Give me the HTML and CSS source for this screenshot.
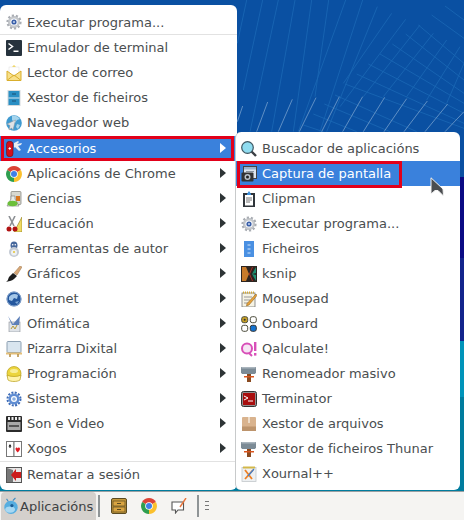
FILE: index.html
```html
<!DOCTYPE html>
<html lang="gl">
<head>
<meta charset="UTF-8" />
<title>Aplicacións</title>
<link rel="stylesheet" href="styles.css">
</head>
<body>
<svg class="defs" width="0" height="0">
  <symbol id="i-gear" viewBox="0 0 16 16"><circle cx="8" cy="8" r="5.6" fill="#c4c7cb" stroke="#c4c7cb" stroke-width="1"/><circle cx="8" cy="8" r="6.6" fill="none" stroke="#a9adb3" stroke-width="2" stroke-dasharray="2.2 1.9"/><circle cx="8" cy="8" r="3.6" fill="#fff"/><circle cx="8" cy="8" r="2.6" fill="#3a5fa8"/><circle cx="8" cy="8" r="1" fill="#c7d4ee"/></symbol>
  <symbol id="i-term" viewBox="0 0 16 16"><rect width="16" height="16" rx="1" fill="#26323d"/><path d="M2.5 3.5l4 3-4 3" fill="none" stroke="#fff" stroke-width="1.5"/><rect x="7.5" y="10.5" width="5" height="1.5" fill="#fff"/></symbol>
  <symbol id="i-mail" viewBox="0 0 16 16"><path d="M8 0l3 3H5z" fill="#f2d34c"/><rect x="3" y="2" width="10" height="8" fill="#fff" stroke="#ddd" stroke-width=".5"/><path d="M1 6l7 5 7-5v9.500H1z" fill="#f8e08a" stroke="#d9ae2c"/><path d="M1.500 15l6.500-5 6.500 5" fill="none" stroke="#d9ae2c"/></symbol>
  <symbol id="i-files" viewBox="0 0 16 16"><rect x="1.500" width="13" height="16" fill="#d5dadd"/><rect x="2.500" y="1" width="11" height="14" fill="#2a8fc4"/><rect x="2.500" y="7.500" width="11" height="1" fill="#d5eaf4"/><rect x="6" y="3.500" width="4" height="1" fill="#1b4e72"/><rect x="6" y="10.500" width="4" height="1" fill="#1b4e72"/></symbol>
  <symbol id="i-web" viewBox="0 0 16 16"><circle cx="8" cy="8" r="7.800" fill="#3f9ad0"/><path d="M6 1c3-1 6 0 8 3l-3 1-2 3-3-3zM11 9l3 1-2 4-2-2z" fill="#a5d4ec"/><path d="M9.500 5L1 9l3 1.500L3 15l2.500-2 1.500 2z" fill="#dfe3e6" stroke="#8a9299" stroke-width=".5"/></symbol>
  <symbol id="i-acc" viewBox="0 0 16 16"><rect x="0.500" y="0.300" width="6.500" height="15.400" rx="3" fill="#d3101c" stroke="#6d0a10" stroke-width=".6"/><path d="M2.500 7.500h2.500M3.750 6.200v2.600" stroke="#fff"/><path d="M8 2l4-2 1 1-2 2 5-1-1 2-3 1 3 4-2 1-4-4-1 1z" fill="#e9edf1"/></symbol>
  <symbol id="i-chrome" viewBox="0 0 16 16"><path d="M8 8L1.100 4A8 8 0 0 1 14.900 4z" fill="#db4437"/><path d="M8 8L14.900 4A8 8 0 0 1 8 16z" fill="#fbc02d"/><path d="M8 8V16A8 8 0 0 1 1.100 4z" fill="#2e9e4f"/><circle cx="8" cy="8" r="3.800" fill="#fff"/><circle cx="8" cy="8" r="3" fill="#3f7fe8"/></symbol>
  <symbol id="i-sci" viewBox="0 0 16 16"><rect x="5" y="0.500" width="10" height="13" rx="1" fill="#d8d8d0" stroke="#7d7d76" stroke-width=".7"/><rect x="10" y="5" width="4" height="5" fill="#d9761e"/><path d="M5 5h4v3l4 7H1l4-7z" fill="#e8ece8" stroke="#777" stroke-width=".6"/><ellipse cx="6.500" cy="12.500" rx="5" ry="2.700" fill="#6cbf3a"/></symbol>
  <symbol id="i-edu" viewBox="0 0 16 16"><path d="M16 1v15H8z" fill="#f0da62" stroke="#8a7a20" stroke-width=".6"/><path d="M3 0l5 10M9 0L4 10" stroke="#8d9094" stroke-width="1.600"/><circle cx="3" cy="13" r="2.500" fill="#b11313"/><circle cx="9" cy="13" r="2.500" fill="#b11313"/></symbol>
  <symbol id="i-auth" viewBox="0 0 16 16"><ellipse cx="8" cy="4.500" rx="3.500" ry="4" fill="#47689c"/><ellipse cx="8" cy="11" rx="5" ry="5" fill="#c3cad3"/><circle cx="8" cy="11.500" r="3" fill="#eef1f4"/><circle cx="8" cy="11" r="1" fill="#e5c22f"/><circle cx="6.700" cy="3.800" r=".8" fill="#fff"/><circle cx="9.300" cy="3.800" r=".8" fill="#fff"/></symbol>
  <symbol id="i-gfx" viewBox="0 0 16 16"><path d="M16 1l-2-1-6 7 3 2z" fill="#d8a878" stroke="#9b7448" stroke-width=".5"/><path d="M7 7l4 3-3 3c-2 2-6 2-8 3 2-1 2-3 3-5z" fill="#1d1d1d"/></symbol>
  <symbol id="i-inet" viewBox="0 0 16 16"><circle cx="8" cy="8" r="7.500" fill="#24579e"/><circle cx="8" cy="8" r="7" fill="none" stroke="#b7cce4" stroke-width=".7"/><path d="M3 6c2-3 6-4 9-2l-1 4-3-1-2 3-3-1z" fill="#a5c7e8"/><path d="M9 11l4-1-2 3z" fill="#7fa9d6"/></symbol>
  <symbol id="i-off" viewBox="0 0 16 16"><rect x="3" y="6" width="11" height="10" fill="#dfe3e8" stroke="#8a8f96" stroke-width=".6"/><path d="M2 0l5 8 7-8-1 9H6z" fill="#5c7fb8"/><path d="M5 13l2-3 2 3 2-4" fill="none" stroke="#b49a3a"/></symbol>
  <symbol id="i-board" viewBox="0 0 16 16"><rect x="1" y="0.500" width="14" height="11" rx="1" fill="#d9e5ef" stroke="#8da0b2"/><rect x="0" y="11.500" width="16" height="2" fill="#e4bf7a"/><path d="M4 13v3M12 13v3" stroke="#b38a40" stroke-width="1.500"/></symbol>
  <symbol id="i-prog" viewBox="0 0 16 16"><circle cx="8" cy="7.500" r="7" fill="#ecd53e" stroke="#b79d1a" stroke-width=".7"/><path d="M1 9c3 2 11 2 14 0l-1 5c-3 2-9 2-12 0z" fill="#fff3a8" stroke="#b79d1a" stroke-width=".7"/><ellipse cx="8" cy="5" rx="4" ry="2" fill="#f8ee9a"/></symbol>
  <symbol id="i-sys" viewBox="0 0 16 16"><circle cx="8" cy="8" r="5.500" fill="#5f8dd3"/><circle cx="8" cy="8" r="6.500" fill="none" stroke="#3d6cb8" stroke-width="2" stroke-dasharray="2 1.400"/><circle cx="8" cy="8" r="3" fill="#fff"/><circle cx="8" cy="8" r="1.800" fill="#8aaee0"/></symbol>
  <symbol id="i-film" viewBox="0 0 16 16"><rect width="16" height="16" rx="1" fill="#2b2b2b"/><path d="M2 1h2v3H2zM5.500 1h2v3h-2zM9 1h2v3H9zM12.500 1h2v3h-2z" fill="#eee"/><rect x="1.500" y="6" width="13" height="8" fill="#a8a8a8"/><rect x="3" y="9" width="10" height="2" fill="#555"/></symbol>
  <symbol id="i-cards" viewBox="0 0 16 16"><rect x="0.500" y="0.500" width="7.500" height="15" fill="#fff" stroke="#777"/><rect x="8" y="0.500" width="7.500" height="15" fill="#fff" stroke="#777"/><path d="M4 3l1.500 2.500H2.500zM3.500 5h1v2h-1z" fill="#111"/><path d="M9.500 8c0-2 2-2 2.200-.5.200-1.500 2.300-1.500 2.300.5 0 1.500-2.200 3-2.300 3.500C11.600 11 9.500 9.500 9.500 8z" fill="#e01b24"/></symbol>
  <symbol id="i-out" viewBox="0 0 16 16"><rect x="0.500" y="0.500" width="15" height="15" fill="#e6e6e6" stroke="#555"/><path d="M1 1l6 2v12H1z" fill="#777"/><path d="M15 5v6h-5v3L5 8l5-6v3z" fill="#cc1a1a"/></symbol>
  <symbol id="i-find" viewBox="0 0 16 16"><path d="M10 10l5 5" stroke="#3a3f44" stroke-width="2.400"/><circle cx="6.500" cy="6.500" r="5.800" fill="#8fdcf0" stroke="#3d5661" stroke-width="1.200"/></symbol>
  <symbol id="i-shot" viewBox="0 0 16 16"><rect x="2.500" y="0.500" width="13" height="12" fill="#dfe6ee" stroke="#444"/><rect x="3" y="1" width="12" height="2.500" fill="#9bb3cc"/><path d="M5 5.500h8" stroke="#8a949e"/><rect x="0.500" y="6.500" width="12" height="9" rx="1" fill="#333"/><circle cx="6.500" cy="11" r="3" fill="#b9c2cb"/><circle cx="6.500" cy="11" r="1.500" fill="#222"/></symbol>
  <symbol id="i-clip" viewBox="0 0 16 16"><rect x="2" y="2" width="12" height="14" fill="#2f3439"/><rect x="4" y="4" width="8" height="10.500" fill="#fff"/><path d="M8 0l2 3v1H6V3z" fill="#3b8fdc"/><path d="M5 7h6M5 9h6M5 11h4" stroke="#777"/></symbol>
  <symbol id="i-fold" viewBox="0 0 16 16"><rect x="3" width="10" height="16" fill="#4a90e2"/><path d="M6.500 4h3M6.500 8h3M6.500 12h3" stroke="#d6e7fa"/></symbol>
  <symbol id="i-ksnip" viewBox="0 0 16 16"><rect width="16" height="16" fill="#2d2420"/><path d="M1 1h4l3 7-3 7H1z" fill="#c77a2a"/><path d="M15 1v6l-4 1zM15 9v6l-4-7z" fill="#1e8f70"/><path d="M8 8l3-7h1L9 8l3 7h-1z" fill="#aa2e26"/></symbol>
  <symbol id="i-pad" viewBox="0 0 16 16"><rect x="1" y="2" width="13" height="14" fill="#f6f3e4" stroke="#777" stroke-width=".8"/><path d="M2 1.500h11" stroke="#d3a82f" stroke-width="2" stroke-dasharray="1 1"/><path d="M3 6h8M3 9h6M3 12h5" stroke="#999"/><path d="M15 3l1 1.500L8 14l-2.500 1 .5-2.500z" fill="#e9a33a" stroke="#7a5518" stroke-width=".5"/></symbol>
  <symbol id="i-onb" viewBox="0 0 16 16"><rect x="0.700" y="0.700" width="6" height="6" rx="2" fill="#c9a227" stroke="#4a4a3a"/><circle cx="3.700" cy="3.700" r="1" fill="#333"/><rect x="9.300" y="0.700" width="6" height="6" rx="2" fill="#fff" stroke="#4a4a3a"/><rect x="0.700" y="9.300" width="6" height="6" rx="2" fill="#fff" stroke="#4a4a3a"/><rect x="9.300" y="9.300" width="6" height="6" rx="2" fill="#1473d0" stroke="#333"/></symbol>
  <symbol id="i-qal" viewBox="0 0 16 16"><circle cx="6" cy="7.500" r="5" fill="#f6e6f4" stroke="#d84fb8" stroke-width="2"/><path d="M8 12l3 3" stroke="#d84fb8" stroke-width="2"/><rect x="13" y="1" width="2.400" height="9" fill="#d84fb8"/><rect x="13" y="12" width="2.400" height="2.600" fill="#d84fb8"/></symbol>
  <symbol id="i-ham" viewBox="0 0 16 16"><path d="M0 1h15v5.500l-1 1.500H1L0 6.500z" fill="#7c8b96"/><rect x="0.500" y="1" width="14" height="1.500" fill="#aab5bd"/><rect x="6" y="8" width="4" height="8" fill="#8a4a20"/><path d="M3 10h10v1.500H3z" fill="#d9541e"/></symbol>
  <symbol id="i-termr" viewBox="0 0 16 16"><rect x="0.500" y="0.500" width="15" height="15" rx="2" fill="#8f8f8f" stroke="#333"/><rect x="2" y="2" width="12" height="12" fill="#a80e0e"/><path d="M3 5l4 2-4 2" fill="none" stroke="#fff"/><path d="M7 10h5" stroke="#fff"/></symbol>
  <symbol id="i-box" viewBox="0 0 16 16"><rect x="1" y="1" width="14" height="14" rx="1" fill="#d9b38e"/><rect x="1" y="10.500" width="14" height="4.500" fill="#bd946c"/><rect x="7" y="1" width="2" height="6" fill="#eedcc8"/></symbol>
  <symbol id="i-xou" viewBox="0 0 16 16"><rect x="1" y="1.500" width="14" height="14" fill="#edf0f2" stroke="#c3c7cb" stroke-width=".8"/><path d="M2 1.500h12" stroke="#d3b84a" stroke-width="2"/><path d="M4 4l7 9M12 4l-8 9" stroke="#ee7f22" stroke-width="1.800"/><path d="M13 3L7 10" stroke="#3f7fd0" stroke-width="1.200"/></symbol>
  <symbol id="i-app" viewBox="0 0 18 18"><circle cx="9" cy="10.500" r="7.500" fill="#57aee0"/><ellipse cx="8" cy="13" rx="5.500" ry="3.500" fill="#a8d8f2"/><circle cx="10" cy="8.500" r="1.800" fill="#1d5f96"/><path d="M6 4L4 1M11 3l3-3" stroke="#3b8cc4" stroke-width="1.200"/></symbol>
  <symbol id="i-drawer" viewBox="0 0 16 16"><rect x="0.500" y="0.500" width="15" height="15" rx="1.500" fill="#c79a3c" stroke="#5a4a22"/><rect x="2" y="3" width="12" height="5" fill="#d9a441" stroke="#5a4a22" stroke-width=".7"/><rect x="2" y="9" width="12" height="5" fill="#d9a441" stroke="#5a4a22" stroke-width=".7"/><path d="M6 5.500h4M6 11.500h4" stroke="#5a4a22"/></symbol>
  <symbol id="i-note" viewBox="0 0 16 16"><path d="M1 4h11.500v8H7l-2.500 3v-3H1z" fill="#fff" stroke="#555" stroke-width="1.100"/><path d="M15 0l-6 9" stroke="#e8743b" stroke-width="1.400"/></symbol>
</svg>

<div class="desktop">
  <div class="wallpaper">
    <div class="band band-blue"></div>
    <div class="band band-navy"></div>
    <div class="band band-indigo"></div>
    <div class="band band-teal"></div>
    <div class="band band-deep"></div>
  </div>
  <svg class="lines" viewBox="0 0 702 405" width="234" height="135">
    <g stroke="#1a68b4" stroke-width="2.500" fill="none">
      <path d="M50 0L22 130M98 0L40 270M145 0L60 395M195 0L125 395M245 0L190 395M296 0L255 290M347 0L205 395M398 0L270 395M442 20L290 395M485 40L340 250M527 58L330 320M570 75L400 290M610 100L460 290M650 120L530 290M690 140L590 300M702 190L650 310"/>
      <path d="M345 252L702 385M380 222L702 370M415 192L702 340M450 162L702 310M487 132L702 280M527 102L702 240M565 75L702 190M605 45L702 115M645 18L702 60M315 285L560 395M283 312L480 395M250 342L380 395M220 375L280 395"/>
    </g>
    <path d="M38 318L22 365M113 306L80 395M187 298L145 395M258 293L208 395M328 290L275 395M398 290L338 395M464 292L400 395M530 296L462 395M592 303L522 395M653 312L585 395M702 335L645 395" stroke="#6f9bcb" stroke-width="2.500" fill="none"/>
  </svg>

  <ul class="menu menu-main">
    <li class="item first"><svg class="ico"><use href="#i-gear"/></svg>Executar programa...</li>
    <li class="sep"></li>
    <li class="item"><svg class="ico"><use href="#i-term"/></svg>Emulador de terminal</li>
    <li class="item"><svg class="ico"><use href="#i-mail"/></svg>Lector de correo</li>
    <li class="item"><svg class="ico"><use href="#i-files"/></svg>Xestor de ficheiros</li>
    <li class="item"><svg class="ico"><use href="#i-web"/></svg>Navegador web</li>
    <li class="item sub active"><svg class="ico"><use href="#i-acc"/></svg>Accesorios</li>
    <li class="item sub"><svg class="ico"><use href="#i-chrome"/></svg>Aplicacións de Chrome</li>
    <li class="item sub"><svg class="ico"><use href="#i-sci"/></svg>Ciencias</li>
    <li class="item sub"><svg class="ico"><use href="#i-edu"/></svg>Educación</li>
    <li class="item sub"><svg class="ico"><use href="#i-auth"/></svg>Ferramentas de autor</li>
    <li class="item sub"><svg class="ico"><use href="#i-gfx"/></svg>Gráficos</li>
    <li class="item sub"><svg class="ico"><use href="#i-inet"/></svg>Internet</li>
    <li class="item sub"><svg class="ico"><use href="#i-off"/></svg>Ofimática</li>
    <li class="item sub"><svg class="ico"><use href="#i-board"/></svg>Pizarra Dixital</li>
    <li class="item sub"><svg class="ico"><use href="#i-prog"/></svg>Programación</li>
    <li class="item sub"><svg class="ico"><use href="#i-sys"/></svg>Sistema</li>
    <li class="item sub"><svg class="ico"><use href="#i-film"/></svg>Son e Video</li>
    <li class="item sub"><svg class="ico"><use href="#i-cards"/></svg>Xogos</li>
    <li class="sep"></li>
    <li class="item"><svg class="ico"><use href="#i-out"/></svg>Rematar a sesión</li>
  </ul>

  <ul class="menu menu-sub">
    <li class="item"><svg class="ico"><use href="#i-find"/></svg>Buscador de aplicacións</li>
    <li class="item active"><svg class="ico"><use href="#i-shot"/></svg>Captura de pantalla</li>
    <li class="item"><svg class="ico"><use href="#i-clip"/></svg>Clipman</li>
    <li class="item"><svg class="ico"><use href="#i-gear"/></svg>Executar programa...</li>
    <li class="item"><svg class="ico"><use href="#i-fold"/></svg>Ficheiros</li>
    <li class="item"><svg class="ico"><use href="#i-ksnip"/></svg>ksnip</li>
    <li class="item"><svg class="ico"><use href="#i-pad"/></svg>Mousepad</li>
    <li class="item"><svg class="ico"><use href="#i-onb"/></svg>Onboard</li>
    <li class="item"><svg class="ico"><use href="#i-qal"/></svg>Qalculate!</li>
    <li class="item"><svg class="ico"><use href="#i-ham"/></svg>Renomeador masivo</li>
    <li class="item"><svg class="ico"><use href="#i-termr"/></svg>Terminator</li>
    <li class="item"><svg class="ico"><use href="#i-box"/></svg>Xestor de arquivos</li>
    <li class="item"><svg class="ico"><use href="#i-ham"/></svg>Xestor de ficheiros Thunar</li>
    <li class="item"><svg class="ico"><use href="#i-xou"/></svg>Xournal++</li>
  </ul>

  <div class="mark mark-acc"></div>
  <div class="mark mark-shot"></div>

  <svg class="cursor" viewBox="0 0 14 22" width="14" height="22">
    <path d="M1 0.800V17l4-3.500 3 0 5.500 5.500L13 12z" fill="#4a4d50" stroke="#f4f4f4" stroke-width="1"/>
  </svg>
</div>

<div class="panel">
  <div class="apps"><svg class="ico-app"><use href="#i-app"/></svg>Aplicacións</div>
  <div class="vline"></div>
  <svg class="tray"><use href="#i-drawer"/></svg>
  <svg class="tray"><use href="#i-chrome"/></svg>
  <svg class="tray"><use href="#i-note"/></svg>
  <div class="vline"></div>
  <div class="handle"><span></span><span></span><span></span></div>
</div>
</body>
</html>
```
FILE: styles.css
```css
html, body {
  margin: 0;
  padding: 0;
}
body {
  width: 464px;
  height: 520px;
  overflow: hidden;
  font-family: "DejaVu Sans", sans-serif;
  font-size: 13px;
  color: #4a4e50;
  background: #f5f4f2;
}
.defs {
  display: block;
  height: 0;
}
.desktop {
  position: relative;
  height: 491px;
  overflow: hidden;
}

/* wallpaper */
.wallpaper {
  position: absolute;
  inset: 0;
  display: flex;
  flex-direction: column;
}
.band-blue { height: 177px; background: #0a50a2; }
.band-navy { height: 81px; background: #0a0a84; }
.band-indigo { height: 83px; background: #12248c; }
.band-teal { height: 56px; background: #0094ba; }
.band-deep { flex: 1; background: #007c9e; }
.lines {
  position: absolute;
  left: 230px;
  top: 0;
}

/* menus */
.menu {
  position: absolute;
  margin: 0;
  list-style: none;
  background: #fff;
  box-sizing: border-box;
}
.menu-main {
  left: 0;
  top: 5px;
  width: 237px;
  height: 485px;
  padding: 5px 0 3px;
  border-radius: 6px;
}
.menu-sub {
  left: 235px;
  top: 132px;
  width: 225px;
  height: 358px;
  padding: 4px 0;
  border-left: 1px solid #c8cacb;
  border-radius: 6px;
}
.item {
  position: relative;
  display: flex;
  align-items: center;
  gap: 5px;
  height: 25px;
  padding-left: 6px;
  white-space: nowrap;
}
.item.first {
  height: 24px;
}
.menu-sub .item {
  padding-left: 5px;
}
.menu-main .item.active {
  margin-top: 1px;
}
.ico {
  width: 16px;
  height: 16px;
  flex: none;
}
.sep {
  height: 1px;
  background: #e2e2e2;
}
.item.sub::after {
  content: "";
  position: absolute;
  left: 220px;
  top: 7px;
  border-left: 6px solid #2e3436;
  border-top: 5.5px solid transparent;
  border-bottom: 5.5px solid transparent;
}
.item.active {
  background: #3a81dc;
  color: #fff;
}
.item.sub.active::after {
  border-left-color: #fff;
}

/* red marks drawn over the shot */
.mark {
  position: absolute;
  box-sizing: border-box;
  border: 3px solid #e2001a;
}
.mark-acc {
  left: 1px;
  top: 136px;
  width: 233px;
  height: 25px;
}
.mark-shot {
  left: 237px;
  top: 161px;
  width: 165px;
  height: 27px;
}
.cursor {
  position: absolute;
  left: 430px;
  top: 177px;
}

/* bottom panel */
.panel {
  display: flex;
  align-items: center;
  height: 29px;
  background: #f5f4f2;
  box-shadow: inset 0 1px 0 #9aa0a3;
}
.apps {
  display: flex;
  align-items: center;
  gap: 1px;
  box-sizing: border-box;
  width: 95px;
  height: 28px;
  margin: 1px 2px 0 1px;
  padding-left: 2px;
  background: #d4d0cc;
  border-radius: 4px 4px 0 0;
  color: #3d4143;
}
.ico-app {
  width: 16px;
  height: 18px;
  flex: none;
}
.vline {
  width: 2px;
  height: 22px;
  background: #8f9496;
}
.tray {
  width: 16px;
  height: 16px;
  margin-left: 11px;
  margin-right: 3px;
}
.tray + .vline {
  margin-left: 7px;
}
.handle {
  display: flex;
  flex-direction: column;
  gap: 3px;
  margin-left: 6px;
}
.handle span {
  display: block;
  width: 4px;
  height: 1px;
  background: #777;
}
```
